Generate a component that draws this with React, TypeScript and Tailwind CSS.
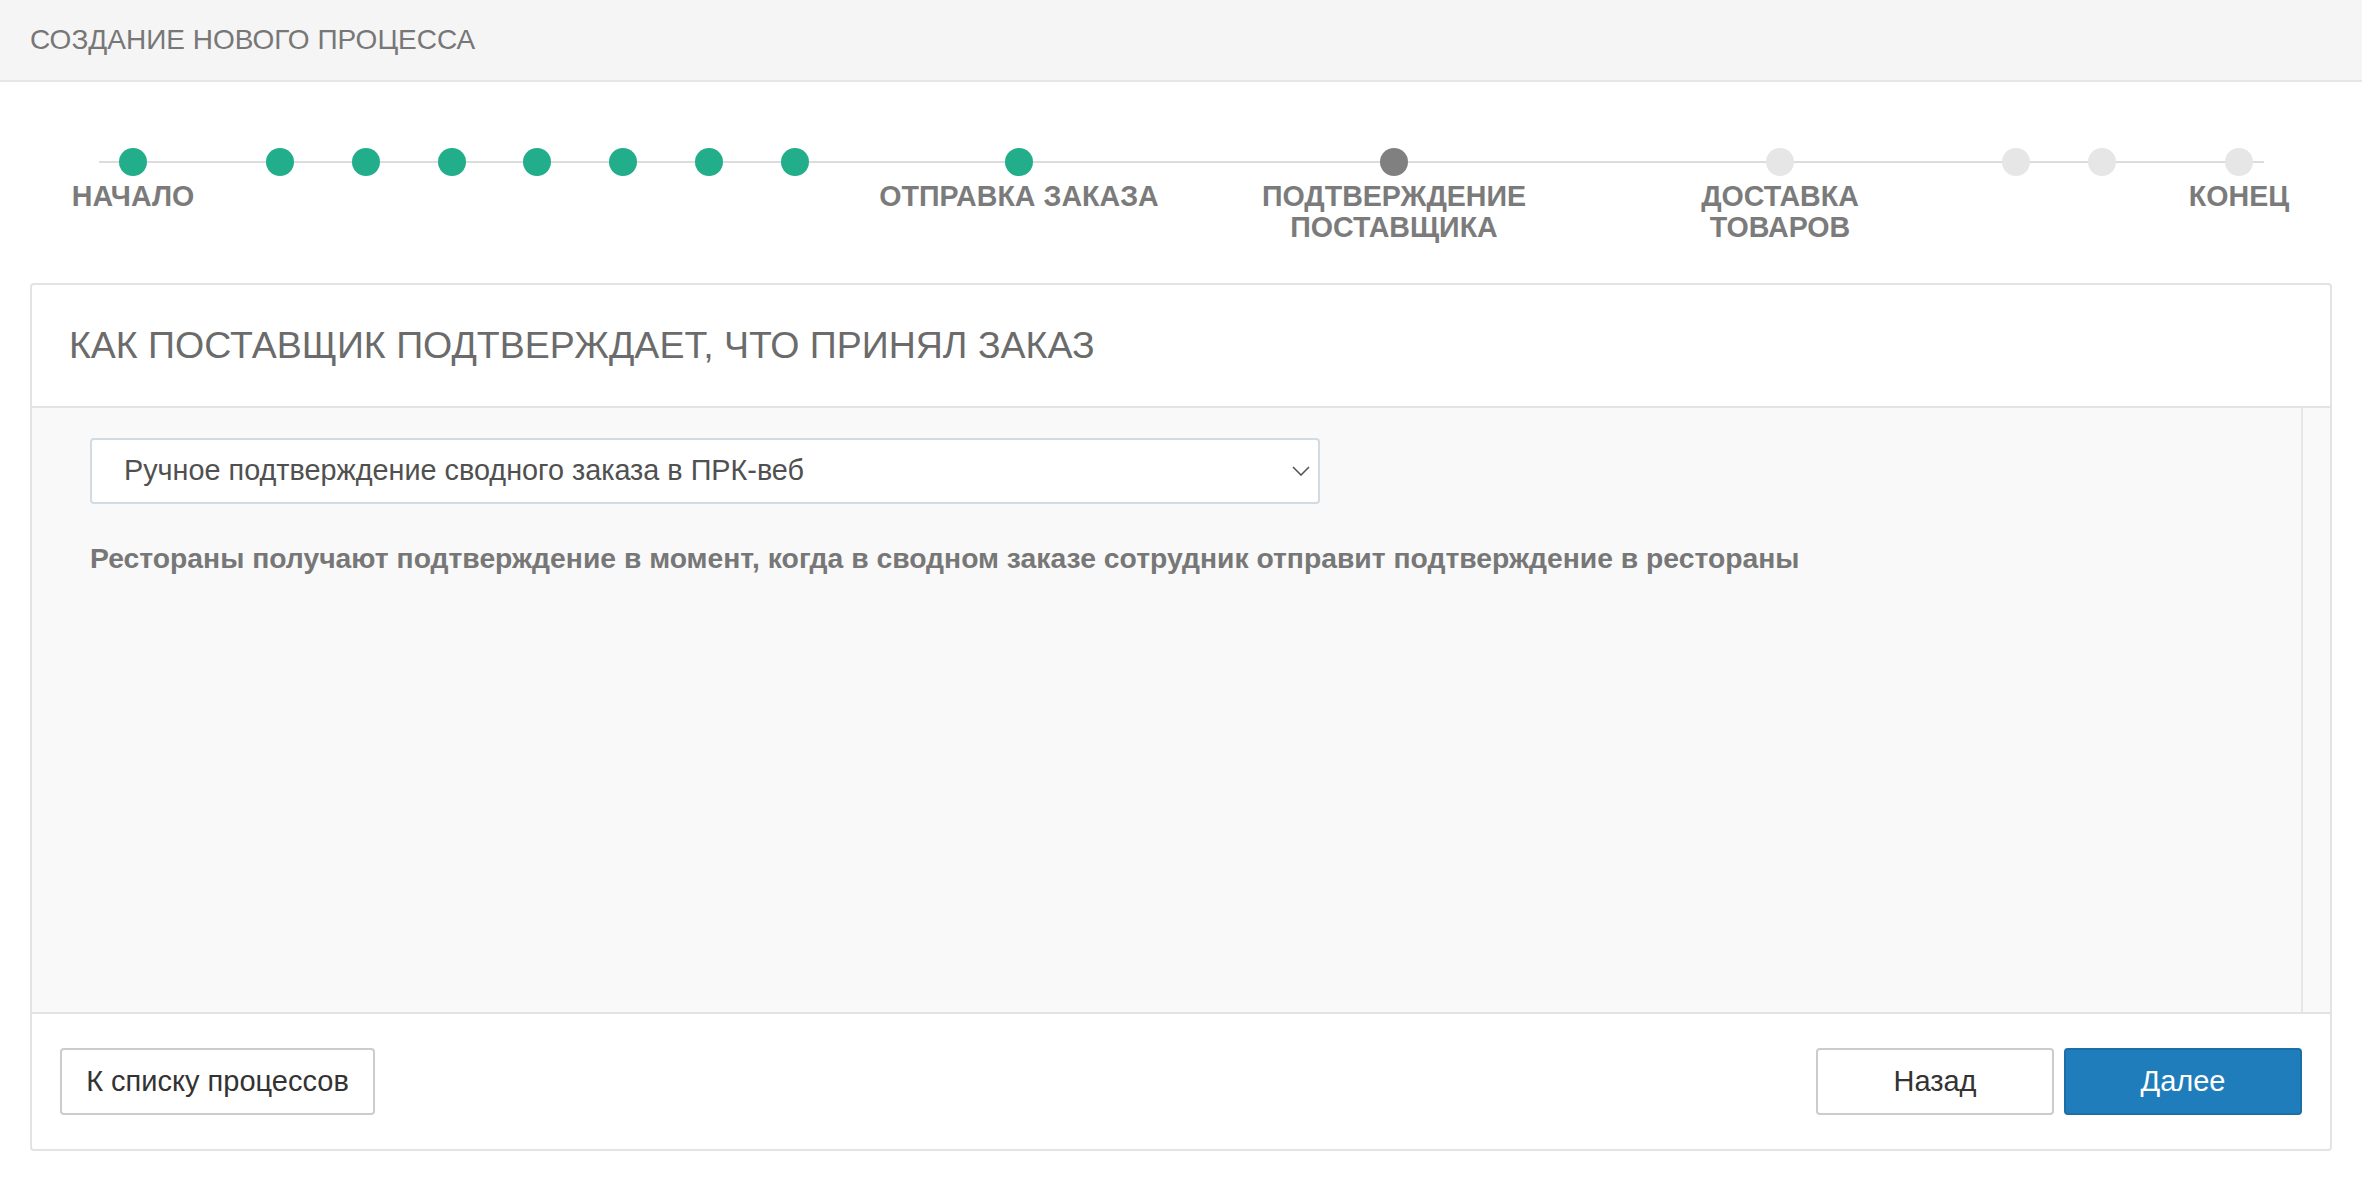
import React from "react";

type Step = {
  x: number;
  state: "done" | "current" | "todo";
  label?: string[];
};

const steps: Step[] = [
  { x: 133, state: "done", label: ["НАЧАЛО"] },
  { x: 280, state: "done" },
  { x: 366, state: "done" },
  { x: 452, state: "done" },
  { x: 537, state: "done" },
  { x: 623, state: "done" },
  { x: 709, state: "done" },
  { x: 795, state: "done" },
  { x: 1019, state: "done", label: ["ОТПРАВКА ЗАКАЗА"] },
  { x: 1394, state: "current", label: ["ПОДТВЕРЖДЕНИЕ", "ПОСТАВЩИКА"] },
  { x: 1780, state: "todo", label: ["ДОСТАВКА", "ТОВАРОВ"] },
  { x: 2016, state: "todo" },
  { x: 2102, state: "todo" },
  { x: 2239, state: "todo", label: ["КОНЕЦ"] },
];

const dotColor = {
  done: "bg-[#22ae8a]",
  current: "bg-[#808080]",
  todo: "bg-[#e6e6e6]",
};

function Stepper() {
  return (
    <div className="relative h-[201px] shrink-0">
      <div className="absolute left-[99px] right-[98px] top-[79px] h-[2px] bg-[#dcdcdc]" />
      {steps.map((s, i) => (
        <React.Fragment key={i}>
          <div
            className={`absolute top-[66px] h-[28px] w-[28px] rounded-full ${dotColor[s.state]}`}
            style={{ left: s.x - 14 }}
          />
          {s.label && (
            <div
              className="absolute top-[99px] -translate-x-1/2 whitespace-nowrap text-center text-[28.6px] font-bold leading-[31px] text-[#7b7b7b]"
              style={{ left: s.x }}
            >
              {s.label.map((l) => (
                <div key={l}>{l}</div>
              ))}
            </div>
          )}
        </React.Fragment>
      ))}
    </div>
  );
}

export default function App() {
  return (
    <div className="flex h-screen w-full flex-col bg-white font-['Liberation_Sans',Arial,sans-serif]">
      <div className="flex h-[82px] shrink-0 items-center border-b-2 border-[#e6e6e6] bg-[#f5f5f5] px-[30px] text-[28px] text-[#777]">
        СОЗДАНИЕ НОВОГО ПРОЦЕССА
      </div>

      <Stepper />

      <div className="mx-[30px] mb-[29px] flex flex-1 flex-col rounded-[4px] border-2 border-[#e3e3e3]">
        <div className="flex h-[123px] shrink-0 items-center border-b-2 border-[#e3e3e3] pl-[37px] text-[37.5px] text-[#6b6b6b]">
          КАК ПОСТАВЩИК ПОДТВЕРЖДАЕТ, ЧТО ПРИНЯЛ ЗАКАЗ
        </div>

        <div className="flex flex-1 border-b-2 border-[#e3e3e3] bg-[#f9f9f9]">
          <div className="flex-1 pl-[58px] pt-[30px]">
            <div className="flex h-[66px] w-[1230px] items-center justify-between rounded-[4px] border-2 border-[#d2dae2] bg-white pl-[32px] pr-[8px] text-[28.8px] text-[#505050]">
              <span>Ручное подтверждение сводного заказа в ПРК-веб</span>
              <svg width="18" height="10" viewBox="0 0 18 10" fill="none">
                <path d="M1 1l8 8 8-8" stroke="#555" strokeWidth="1.6" />
              </svg>
            </div>
            <div className="mt-[38px] text-[28.3px] font-bold leading-[32px] text-[#777]">
              Рестораны получают подтверждение в момент, когда в сводном заказе сотрудник отправит подтверждение в рестораны
            </div>
          </div>
          <div className="w-[29px] border-l-2 border-[#e6e6e6] bg-[#f9f9f9]" />
        </div>

        <div className="flex h-[135px] shrink-0 items-center justify-between px-[28px] text-[29px]">
          <button className="h-[67px] w-[315px] rounded-[4px] border-2 border-[#cccccc] bg-white text-[#333]">
            К списку процессов
          </button>
          <div className="flex gap-[10px]">
            <button className="h-[67px] w-[238px] rounded-[4px] border-2 border-[#cccccc] bg-white text-[#333]">
              Назад
            </button>
            <button className="h-[67px] w-[238px] rounded-[4px] border-2 border-[#1b6ea6] bg-[#1f7dbb] text-white">
              Далее
            </button>
          </div>
        </div>
      </div>
    </div>
  );
}
